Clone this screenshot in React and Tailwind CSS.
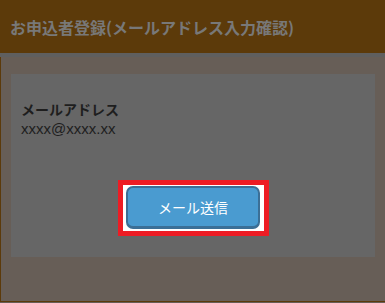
export default function App() {
  return (
    <div className="w-[385px] h-[303px] overflow-hidden bg-[#675e57] font-['Noto_Sans_CJK_JP',sans-serif]">
      {/* Header */}
      <div className="h-[53px] bg-[#5c3a0a] px-[10px] flex items-center">
        <h1 className="text-[16px] font-bold text-[#787878] leading-none">
          お申込者登録(メールアドレス入力確認)
        </h1>
      </div>
      <div className="h-[4px] bg-[#5f5f5f]" />

      {/* Body */}
      <div className="h-[245px] border-l border-b border-[#5c3a0a] bg-[#675e57] pt-[17px] px-[10px]">
        <div className="w-[364px] h-[183px] bg-[#666666] px-[10px] pt-[25px]">
          <div className="text-[14px] font-bold leading-[20px] text-[#1e1e1e]">メールアドレス</div>
          <div className="text-[15px] leading-[20px] text-[#1e1e1e] font-['Liberation_Sans',sans-serif]">
            xxxx@xxxx.xx
          </div>

          <div className="mt-[41px] flex justify-center">
            <div className="w-[151px] h-[56px] border-[5px] border-[#ed1c24] bg-white flex items-start justify-center pt-[1px]">
              <button className="w-[134px] h-[43px] bg-[#4a9bd0] border-2 border-b-[3px] border-[#3b6f96] rounded-[7px] text-white text-[14px] leading-none">
                メール送信
              </button>
            </div>
          </div>
        </div>
      </div>
    </div>
  );
}
